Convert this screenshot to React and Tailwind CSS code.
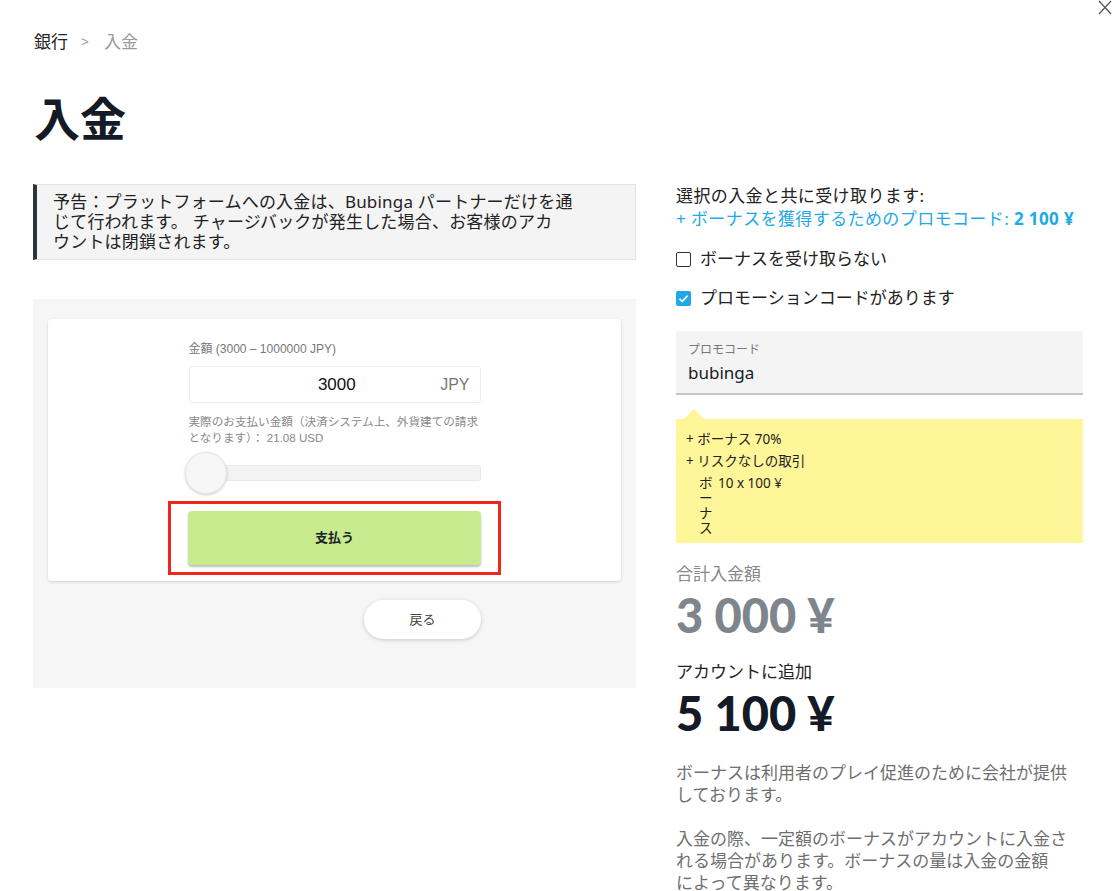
import React from "react";

const jp = { fontFamily: "'Noto Sans', 'Noto Sans CJK JP', sans-serif" };
const helv = { fontFamily: "'Liberation Sans', 'Noto Sans CJK JP', sans-serif" };
const lato = { fontFamily: "Lato, 'Noto Sans', sans-serif" };

function Checkbox({ checked }) {
  if (checked) {
    return (
      <span className="flex h-[15px] w-[15px] items-center justify-center rounded-[2px] bg-[#1ea8e6]">
        <svg width="11" height="11" viewBox="0 0 11 11">
          <polyline points="1.5,5.8 4.3,8.4 9.6,2.6" fill="none" stroke="#fff" strokeWidth="1.6" />
        </svg>
      </span>
    );
  }
  return <span className="block h-[15px] w-[15px] rounded-[2px] border-[1.5px] border-[#333]" />;
}

export default function App() {
  return (
    <div className="relative h-[891px] w-[1116px] overflow-hidden bg-white text-[#161b24]" style={jp}>
      <svg className="absolute right-[3px] top-[0px]" width="16" height="16" viewBox="0 0 16 16">
        <line x1="2" y1="1" x2="14" y2="14" stroke="#555" strokeWidth="1.2" />
        <line x1="14" y1="1" x2="2" y2="14" stroke="#555" strokeWidth="1.2" />
      </svg>

      <div className="pl-[34px] pt-[32px]">
        <div className="flex items-center text-[17px] leading-[20px]">
          <span className="text-[#222]">銀行</span>
          <span className="ml-[13px] mr-[15px] text-[14px] text-[#999]">&gt;</span>
          <span className="text-[#999]">入金</span>
        </div>
        <h1 className="mt-[40px] text-[46px] font-bold leading-[52px] text-[#141b26]">入金</h1>

        <div className="mt-[40px] flex">
          {/* left column */}
          <div className="-ml-[1px] w-[603px]">
            <div className="border border-l-4 border-[#e3e3e3] border-l-[#2f343c] bg-[#f4f4f4] py-[7px] pl-[16px] text-[17px] leading-[20px] tracking-[0.2px] text-[#222]">
              予告：プラットフォームへの入金は、Bubinga パートナーだけを通
              <br />
              じて行われます。 チャージバックが発生した場合、お客様のアカ
              <br />
              ウントは閉鎖されます。
            </div>

            <div className="mt-[39px] h-[389px] bg-[#f6f6f6] px-[15px] pt-[20px]" style={helv}>
              <div className="flex flex-col items-center rounded-[4px] bg-white pb-[6px] pt-[22px] shadow-[0_1px_3px_rgba(0,0,0,0.15)]">
                <div className="w-[292px]">
                  <div className="text-[12px] leading-[16px] text-[#777]">金額 (3000 – 1000000 JPY)</div>
                  <div className="mt-[9px] flex h-[37px] items-center rounded-[3px] border border-[#ececec] pr-[10px]">
                    <span className="flex-1 pl-[44px] text-center text-[17px] text-[#111]">3000</span>
                    <span className="text-[16px] text-[#777]">JPY</span>
                  </div>
                  <div className="mt-[11px] whitespace-nowrap text-[11.6px] leading-[16px] text-[#888]">
                    実際のお支払い金額（決済システム上、外貨建ての請求
                    <br />
                    となります）： 21.08 USD
                  </div>
                  <div className="relative mt-[6px] h-[42px]">
                    <div className="absolute left-0 right-0 top-[13px] h-[16px] rounded-[3px] border border-[#e8e8e8] bg-[#f3f3f3]" />
                    <div className="absolute left-[-4px] top-0 h-[42px] w-[42px] rounded-full border border-[#e6e6e6] bg-[#f6f6f6] shadow-[0_1px_3px_rgba(0,0,0,0.2)]" />
                  </div>
                </div>
                <div className="mt-[7px] border-[3px] border-[#f0261b] px-[17px] py-[7px]">
                  <button className="flex h-[54px] w-[293px] items-center justify-center rounded-[4px] bg-[#c8eb8e] text-[13px] font-bold text-[#1a1f28] shadow-[0_2px_2px_rgba(0,0,0,0.25)]" style={jp}>
                    支払う
                  </button>
                </div>
              </div>
              <div className="mt-[19px] flex justify-end pr-[140px]">
                <button className="flex h-[39px] w-[117px] items-center justify-center rounded-full bg-white text-[13px] text-[#444] shadow-[0_1px_4px_rgba(0,0,0,0.18)]" style={jp}>
                  戻る
                </button>
              </div>
            </div>
          </div>

          {/* right column */}
          <div className="ml-[40px] w-[407px]">
            <div className="text-[17px] leading-[23px] tracking-[0.4px]">
              <div className="text-[#222]">選択の入金と共に受け取ります:</div>
              <div className="text-[#1fa9e6]">
                + ボーナスを獲得するためのプロモコード: <span className="font-bold">2 100 ¥</span>
              </div>
            </div>

            <div className="mt-[17px] flex h-[24px] items-center gap-[9px] text-[17px] text-[#222]">
              <Checkbox />
              <span>ボーナスを受け取らない</span>
            </div>
            <div className="mt-[15px] flex h-[24px] items-center gap-[9px] text-[17px] text-[#222]">
              <Checkbox checked />
              <span>プロモーションコードがあります</span>
            </div>

            <div className="mt-[21px] h-[64px] rounded-t-[2px] border-b-2 border-[#c6c6c6] bg-[#f4f4f4] px-[12px] pt-[11px]">
              <div className="text-[12px] leading-[16px] text-[#777]">プロモコード</div>
              <div className="mt-[4px] text-[17px] leading-[22px] text-[#161b24]">bubinga</div>
            </div>

            <div className="relative mt-[24px] h-[124px] bg-[#fff599] px-[10px] pt-[9px] text-[13.5px] text-[#222]">
              <span className="absolute left-[8px] top-[-10px] h-0 w-0 border-b-[10px] border-l-[10px] border-r-[10px] border-b-[#fff599] border-l-transparent border-r-transparent" />
              <div className="leading-[22px]">+ ボーナス 70%</div>
              <div className="leading-[22px]">+ リスクなしの取引</div>
              <div className="flex pl-[13px] pt-[4px] leading-[15px]">
                <span className="w-[14px] break-all">ボーナス</span>
                <span className="ml-[5px]">10 x 100 ¥</span>
              </div>
            </div>

            <div className="mt-[20px] text-[17px] leading-[22px] text-[#888]">合計入金額</div>
            <div className="mt-[3px] text-[47px] font-black leading-[54px] text-[#7e858c]" style={lato}>3 000 ¥</div>
            <div className="mt-[19px] text-[17px] leading-[22px] text-[#222]">アカウントに追加</div>
            <div className="mt-[3px] text-[47px] font-black leading-[54px] text-[#141b26]" style={lato}>5 100 ¥</div>

            <div className="mt-[22px] text-[17px] leading-[22px] text-[#6f6f6f]">
              <p>
                ボーナスは利用者のプレイ促進のために会社が提供
                <br />
                しております。
              </p>
              <p className="mt-[22px]">
                入金の際、一定額のボーナスがアカウントに入金さ
                <br />
                れる場合があります。ボーナスの量は入金の金額
                <br />
                によって異なります。
              </p>
            </div>
          </div>
        </div>
      </div>
    </div>
  );
}
